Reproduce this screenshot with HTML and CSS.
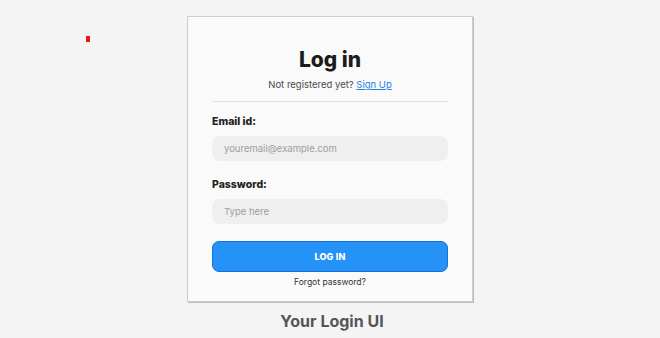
FILE: index.html
```html
<!DOCTYPE html>
<html>
<head>
<meta charset="utf-8">
<link rel="stylesheet" href="styles.css">
</head>
<body>
<span class="marker"></span>
<main class="page">
  <div class="card">
    <h1 class="title">Log in</h1>
    <p class="sub">Not registered yet? <a href="#" class="link">Sign Up</a></p>
    <hr class="divider">
    <label class="label">Email id:</label>
    <div class="input">youremail@example.com</div>
    <label class="label">Password:</label>
    <div class="input">Type here</div>
    <button class="btn">LOG IN</button>
    <p class="forgot">Forgot password?</p>
  </div>
  <div class="caption">Your Login UI</div>
</main>
</body>
</html>
```
FILE: styles.css
```css
html, body {
  margin: 0;
  padding: 0;
  background: #f4f4f4;
  font-family: "Inter", "Noto Sans", sans-serif;
  width: 660px;
  height: 338px;
  overflow: hidden;
}
.marker {
  position: absolute;
  left: 86px;
  top: 36px;
  width: 4px;
  height: 6px;
  background: #e8161b;
}
.page {
  display: flex;
  flex-direction: column;
  align-items: center;
  padding-top: 16px;
}
.card {
  box-sizing: border-box;
  width: 286px;
  height: 286px;
  background: #fafafa;
  border: 1px solid #cdcdcd;
  box-shadow: 1px 1px 0 #bdbdbd;
  padding: 30px 24px 0;
  display: flex;
  flex-direction: column;
}
.title {
  margin: 0;
  text-align: center;
  font-size: 21px;
  font-weight: 800;
  color: #1c1c1c;
  line-height: 26px;
}
.sub {
  margin: 5px 0 0;
  text-align: center;
  font-size: 9.5px;
  color: #4a4a4a;
  line-height: 14px;
}
.link {
  color: #1b7fe6;
  text-decoration: underline;
}
.divider {
  border: 0;
  border-top: 1px solid #e2e2e2;
  margin: 9px 0 0;
}
.label {
  display: block;
  margin-top: 14px;
  font-size: 10.5px;
  font-weight: 800;
  color: #222;
  line-height: 12px;
}
.input {
  margin-top: 8px;
  height: 25px;
  border-radius: 8px;
  background: #efefef;
  font-size: 9.5px;
  color: #9e9e9e;
  display: flex;
  align-items: center;
  padding-left: 12px;
}
.input + .label {
  margin-top: 18px;
}
.btn {
  margin-top: 17px;
  height: 31px;
  border: 1px solid #1a6fd0;
  border-radius: 7px;
  background: #2592f8;
  color: #fff;
  font-family: inherit;
  font-size: 9px;
  font-weight: 800;
  letter-spacing: 0.2px;
}
.forgot {
  margin: 4px 0 0;
  text-align: center;
  font-size: 8.5px;
  color: #333;
  line-height: 12px;
}
.caption {
  margin-top: 9px;
  font-size: 16px;
  font-weight: 700;
  color: #555;
  margin-left: 4px;
}
```
